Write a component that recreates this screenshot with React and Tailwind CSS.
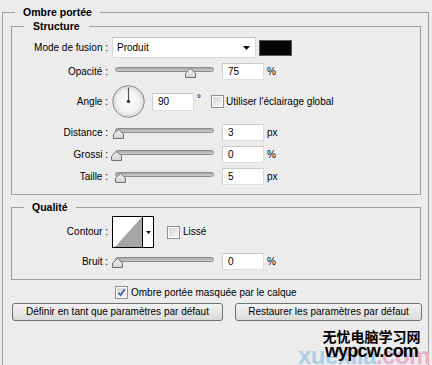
import React from "react";

function Slider({ left }) {
  return (
    <div className="relative w-[106px] h-[17px] shrink-0">
      <div className="absolute left-[3px] top-[4px] w-[99px] h-[5px] rounded-full border border-[#8a8a8a] bg-gradient-to-b from-[#a8a8a8] to-[#cdcdcd]" />
      <svg
        className="absolute top-[5px]"
        style={{ left: `${left}px` }}
        width="11"
        height="10"
        viewBox="0 0 11 10"
      >
        <defs>
          <linearGradient id="thumbg" x1="0" y1="0" x2="0" y2="1">
            <stop offset="0" stopColor="#f4f4f4" />
            <stop offset="1" stopColor="#d2d2d2" />
          </linearGradient>
        </defs>
        <path d="M5.5 0.5 L10.5 5 L10.5 9.5 L0.5 9.5 L0.5 5 Z" fill="url(#thumbg)" stroke="#707070" />
      </svg>
    </div>
  );
}

function Field({ value, className = "" }) {
  return (
    <div
      className={`w-[42px] h-[17px] shrink-0 bg-white border border-[#dedede] border-t-[#c9c9c9] border-l-[#cfcfcf] pl-[5px] flex items-center leading-none ${className}`}
    >
      {value}
    </div>
  );
}

function Check({ checked }) {
  return (
    <div className="w-[13px] h-[13px] shrink-0 border border-[#8e8f8f] bg-white p-[1px]">
      <div className="w-full h-full bg-gradient-to-br from-[#d4d4d4] to-[#f6f6f6] flex items-center justify-center">
        {checked && (
          <svg width="9" height="9" viewBox="0 0 9 9">
            <path d="M1.5 4.8 L3.6 7.2 L7.6 1.2" fill="none" stroke="#3a5da8" strokeWidth="1.7" />
          </svg>
        )}
      </div>
    </div>
  );
}

function Label({ children }) {
  return <div className="w-[96px] shrink-0 text-right leading-none">{children}</div>;
}

function Dial() {
  return (
    <svg width="34" height="33" viewBox="0 0 34 33" className="shrink-0">
      <defs>
        <radialGradient id="dialg" cx="0.5" cy="0.5" r="0.5">
          <stop offset="0" stopColor="#ffffff" />
          <stop offset="0.7" stopColor="#f2f2f2" />
          <stop offset="1" stopColor="#d8d8d8" />
        </radialGradient>
      </defs>
      <circle cx="16.5" cy="16.5" r="15.8" fill="url(#dialg)" stroke="#8a8a8a" strokeWidth="1" />
      <line x1="16.5" y1="16.5" x2="16.5" y2="2.5" stroke="#505050" strokeWidth="1.2" />
      <circle cx="16.5" cy="16.5" r="1.7" fill="#3a3a3a" />
    </svg>
  );
}

export default function App() {
  return (
    <div className="relative w-[432px] h-[365px] overflow-hidden bg-[#ececec] text-[10px] text-black font-['Liberation_Sans',Arial,sans-serif]">
      <fieldset className="mt-[6px] ml-[2px] w-[426px] h-[380px] border border-[#9e9e9e] p-0 m-0">
        <legend className="ml-[12px] px-[8px] font-bold text-[10.5px] leading-[13px]">Ombre portée</legend>
        <div className="pl-[8px] pr-[6px] mt-[1px]">
          {/* Structure */}
          <fieldset className="w-[410px] border border-[#9e9e9e] pb-[9px]">
            <legend className="ml-[12px] px-[9px] font-bold text-[10.5px] leading-[13px]">Structure</legend>
            <div className="flex flex-col mt-[4px]">
              <div className="flex items-center h-[21px]">
                <Label>Mode de fusion :</Label>
                <div className="ml-[4px] w-[144px] h-[21px] bg-white border border-[#d8d8d8] border-t-[#c4c4c4] flex items-center justify-between pl-[4px] pr-[5px]">
                  <span className="leading-none">Produit</span>
                  <svg width="7" height="4" viewBox="0 0 7 4">
                    <path d="M0 0 L7 0 L3.5 4 Z" fill="#111" />
                  </svg>
                </div>
                <div className="ml-[3px] w-[33px] h-[16px] bg-[#050505] border border-[#555]" />
              </div>
              <div className="flex items-center h-[17px] mt-[5px]">
                <Label>Opacité :</Label>
                <div className="ml-[4px]">
                  <Slider left={73} />
                </div>
                <Field value="75" className="ml-[4px]" />
                <span className="ml-[3px] leading-none">%</span>
              </div>
              <div className="flex items-center h-[33px] mt-[5px]">
                <Label>Angle :</Label>
                <div className="ml-[4px]">
                  <Dial />
                </div>
                <Field value="90" className="ml-[6px] w-[40px] h-[18px]" />
                <span className="ml-[3px] leading-none self-start mt-[9px]">°</span>
                <div className="ml-[10px]">
                  <Check />
                </div>
                <span className="ml-[2px] leading-none">Utiliser l'éclairage global</span>
              </div>
              <div className="flex items-center h-[17px] mt-[6px]">
                <Label>Distance :</Label>
                <div className="ml-[4px]">
                  <Slider left={1} />
                </div>
                <Field value="3" className="ml-[4px]" />
                <span className="ml-[3px] leading-none">px</span>
              </div>
              <div className="flex items-center h-[17px] mt-[5px]">
                <Label>Grossi :</Label>
                <div className="ml-[4px]">
                  <Slider left={-1} />
                </div>
                <Field value="0" className="ml-[4px]" />
                <span className="ml-[3px] leading-none">%</span>
              </div>
              <div className="flex items-center h-[17px] mt-[5px]">
                <Label>Taille :</Label>
                <div className="ml-[4px]">
                  <Slider left={3} />
                </div>
                <Field value="5" className="ml-[4px]" />
                <span className="ml-[3px] leading-none">px</span>
              </div>
            </div>
          </fieldset>

          {/* Qualité */}
          <fieldset className="w-[410px] border border-[#9e9e9e] pb-[9px] mt-[6px]">
            <legend className="ml-[12px] px-[8px] font-bold text-[10.5px] leading-[13px]">Qualité</legend>
            <div className="flex flex-col mt-[2px]">
              <div className="flex items-center h-[32px]">
                <Label>Contour :</Label>
                <div className="ml-[4px] w-[42px] h-[32px] border border-black bg-white flex">
                  <svg width="29" height="30" viewBox="0 0 29 30" className="shrink-0">
                    <path d="M2 30 L28 1 L29 1 L29 30 Z" fill="#a6a6a6" />
                  </svg>
                  <div className="w-[1px] h-full bg-black" />
                  <div className="flex-1 flex items-center justify-center">
                    <svg width="5" height="3" viewBox="0 0 5 3">
                      <path d="M0 0 L5 0 L2.5 3 Z" fill="#111" />
                    </svg>
                  </div>
                </div>
                <div className="ml-[13px]">
                  <Check />
                </div>
                <span className="ml-[3px] leading-none">Lissé</span>
              </div>
              <div className="flex items-center h-[17px] mt-[5px]">
                <Label>Bruit :</Label>
                <div className="ml-[4px]">
                  <Slider left={0} />
                </div>
                <Field value="0" className="ml-[4px]" />
                <span className="ml-[3px] leading-none">%</span>
              </div>
            </div>
          </fieldset>

          <div className="flex items-center h-[13px] mt-[6px] ml-[104px]">
            <Check checked />
            <span className="ml-[3px] leading-none">Ombre portée masquée par le calque</span>
          </div>

          <div className="flex mt-[4px] ml-[1px] gap-[12px]">
            <button className="w-[211px] h-[18px] rounded-[3px] border border-[#707070] bg-gradient-to-b from-[#f3f3f3] to-[#dadada] text-[10px] leading-none">
              Définir en tant que paramètres par défaut
            </button>
            <button className="w-[187px] h-[18px] rounded-[3px] border border-[#707070] bg-gradient-to-b from-[#f3f3f3] to-[#dadada] text-[10px] leading-none">
              Restaurer les paramètres par défaut
            </button>
          </div>
        </div>
      </fieldset>

      {/* watermark */}
      <div className="absolute left-[298px] top-[344px] text-[24px] font-bold leading-none tracking-[-0.5px] font-['Liberation_Sans',sans-serif]">
        <span className="text-[#a9d0e6]">xuexila</span>
        <span className="text-[#eab2cd]">.com</span>
      </div>
      <div className="absolute left-[322px] top-[329px] w-[99px] flex flex-col items-center leading-none">
        <span className="text-[14px] font-bold text-black font-['Noto_Sans_CJK_SC',sans-serif] leading-[15px]">无忧电脑学习网</span>
        <span className="text-[18px] font-bold tracking-[-0.8px] text-black font-['Liberation_Sans',sans-serif] leading-[14px]">wypcw.com</span>
      </div>
    </div>
  );
}
